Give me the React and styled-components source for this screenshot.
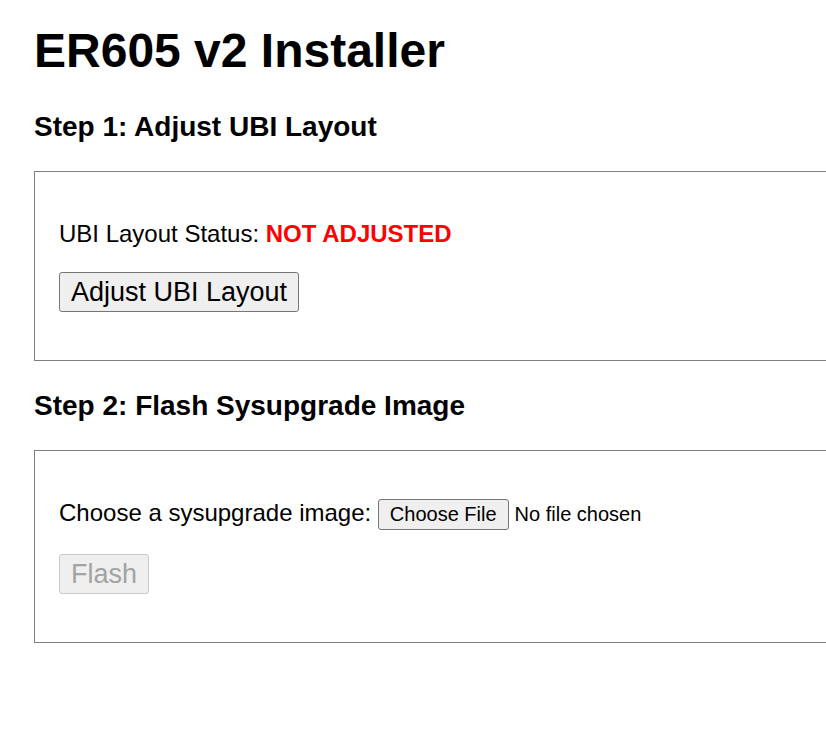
import React from 'react';
import styled, { createGlobalStyle } from 'styled-components';

const GlobalStyle = createGlobalStyle`
  html,
  body {
    margin: 0;
    padding: 0;
    overflow: hidden;
    background: #ffffff;
  }

  body {
    font-family: 'Liberation Sans', Arial, sans-serif;
    font-size: 24px;
    color: #000000;
  }
`;

const Page = styled.main`
  width: 900px;
  padding: 23px 0 40px 34px;
`;

const Title = styled.h1`
  font-size: 48px;
  font-weight: 700;
  margin: 0 0 33px;
`;

const StepHeading = styled.h2`
  font-size: 28px;
  font-weight: 700;
  margin: 29px 0 28px;
`;

const Panel = styled.section`
  border: 1px solid #808080;
  padding: 24px 24px;
`;

const Row = styled.p`
  margin: 24px 0;
`;

const Status = styled.span`
  color: ${(props) => (props.ok ? '#008000' : '#ff0000')};
  font-weight: 700;
`;

const Button = styled.button`
  font-family: 'Liberation Sans', Arial, sans-serif;
  font-size: 27px;
  padding: 3.5px 11px;
  border: 1px solid ${(props) => (props.disabled ? '#c9c9c9' : '#767676')};
  border-radius: 3px;
  background: #efefef;
  color: ${(props) => (props.disabled ? '#a3a3a3' : '#000000')};
  cursor: ${(props) => (props.disabled ? 'default' : 'pointer')};
`;

const FileInput = styled.input`
  font-family: 'Liberation Sans', Arial, sans-serif;
  font-size: 20px;
  color: #000000;

  &::file-selector-button {
    font-family: 'Liberation Sans', Arial, sans-serif;
    font-size: 20px;
    padding: 3px 11px;
    margin-right: 6px;
    border: 1px solid #767676;
    border-radius: 3px;
    background: #efefef;
    color: #000000;
  }
`;

export default function App() {
  return (
    <>
      <GlobalStyle />
      <Page>
        <Title>ER605 v2 Installer</Title>

        <StepHeading>Step 1: Adjust UBI Layout</StepHeading>
        <Panel>
          <Row>
            UBI Layout Status: <Status>NOT ADJUSTED</Status>
          </Row>
          <Row>
            <Button type="button">Adjust UBI Layout</Button>
          </Row>
        </Panel>

        <StepHeading>Step 2: Flash Sysupgrade Image</StepHeading>
        <Panel>
          <Row>
            Choose a sysupgrade image: <FileInput type="file" />
          </Row>
          <Row>
            <Button type="button" disabled>
              Flash
            </Button>
          </Row>
        </Panel>
      </Page>
    </>
  );
}
